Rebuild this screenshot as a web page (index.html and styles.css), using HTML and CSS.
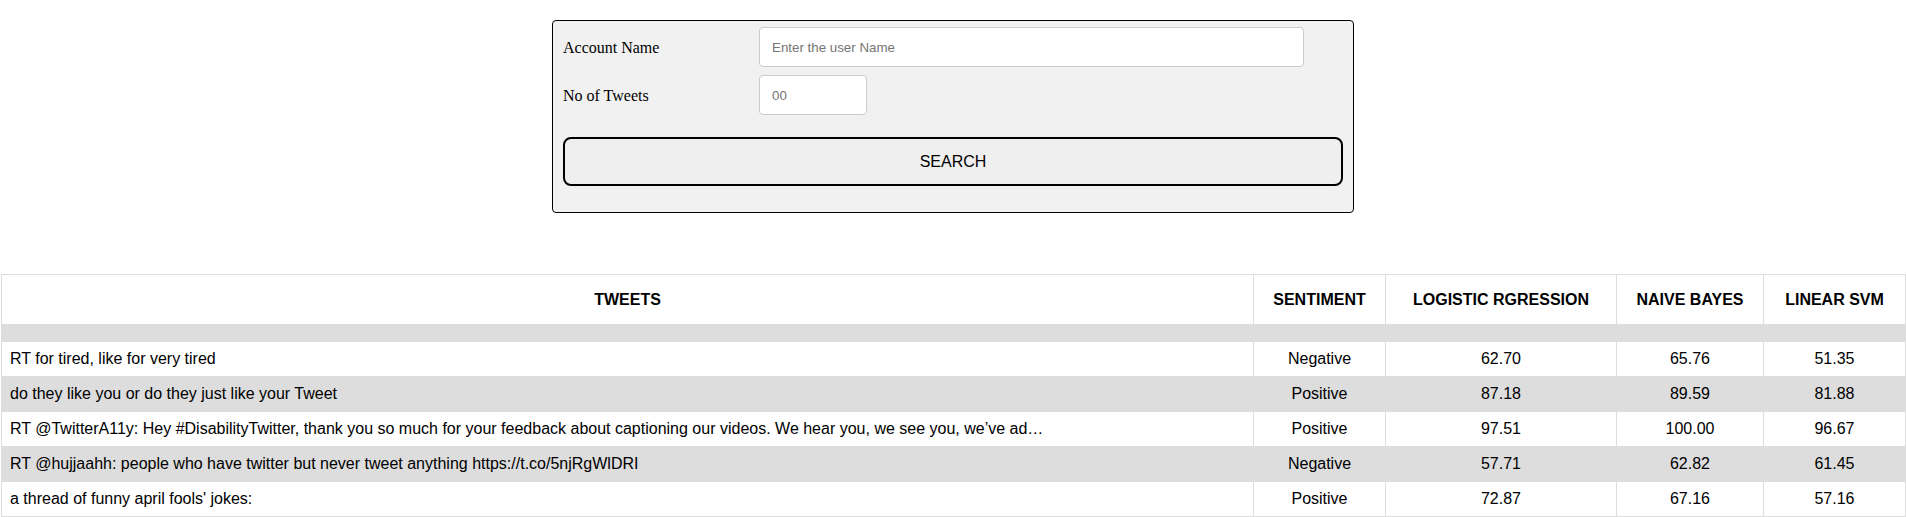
FILE: index.html
```html
<!DOCTYPE html>
<html lang="en">
<head>
<meta charset="utf-8">
<title>Tweet Sentiment</title>
<link rel="stylesheet" href="styles.css">
</head>
<body>
<form class="search-box">
  <div class="field-row">
    <label class="field-label" for="acc">Account Name</label>
    <input class="field-input input-name" id="acc" type="text" placeholder="Enter the user Name">
  </div>
  <div class="field-row">
    <label class="field-label" for="cnt">No of Tweets</label>
    <input class="field-input input-count" id="cnt" type="text" placeholder="00">
  </div>
  <button class="search-btn" type="button">SEARCH</button>
</form>

<table class="results">
  <colgroup>
    <col class="col-tweet">
    <col class="col-sent">
    <col class="col-lr">
    <col class="col-nb">
    <col class="col-svm">
  </colgroup>
  <thead>
    <tr>
      <th>TWEETS</th>
      <th>SENTIMENT</th>
      <th>LOGISTIC RGRESSION</th>
      <th>NAIVE BAYES</th>
      <th>LINEAR SVM</th>
    </tr>
  </thead>
  <tbody>
    <tr class="empty-row"><td></td><td></td><td></td><td></td><td></td></tr>
    <tr><td class="tweet">RT for tired, like for very tired</td><td>Negative</td><td>62.70</td><td>65.76</td><td>51.35</td></tr>
    <tr><td class="tweet">do they like you or do they just like your Tweet</td><td>Positive</td><td>87.18</td><td>89.59</td><td>81.88</td></tr>
    <tr><td class="tweet">RT @TwitterA11y: Hey #DisabilityTwitter, thank you so much for your feedback about captioning our videos. We hear you, we see you, we’ve ad…</td><td>Positive</td><td>97.51</td><td>100.00</td><td>96.67</td></tr>
    <tr><td class="tweet">RT @hujjaahh: people who have twitter but never tweet anything https://t.co/5njRgWlDRI</td><td>Negative</td><td>57.71</td><td>62.82</td><td>61.45</td></tr>
    <tr><td class="tweet">a thread of funny april fools' jokes:</td><td>Positive</td><td>72.87</td><td>67.16</td><td>57.16</td></tr>
  </tbody>
</table>
</body>
</html>
```

FILE: styles.css
```css
html, body {
  margin: 0;
  padding: 0;
  background: #fff;
}

body {
  font-family: "Liberation Sans", Arial, sans-serif;
  color: #000;
}

.search-box {
  width: 780px;
  margin: 20px auto 0;
  padding: 6px 10px 26px;
  border: 1px solid #000;
  border-radius: 4px;
  background: #f1f1f1;
  display: flex;
  flex-direction: column;
  gap: 8px;
}

.field-row {
  display: flex;
  align-items: center;
  height: 40px;
}

.field-label {
  width: 196px;
  flex: none;
  padding-top: 1px;
  font-family: "Liberation Serif", "Times New Roman", serif;
  font-size: 16px;
  color: #000;
}

.field-input {
  box-sizing: border-box;
  height: 40px;
  border: 1px solid #ccc;
  border-radius: 4px;
  background: #fff;
  padding: 0 12px;
  font-family: "Liberation Sans", Arial, sans-serif;
  font-size: 13.333px;
  color: #000;
  outline: none;
}

.field-input::placeholder {
  color: #757575;
}

.input-name {
  width: 545px;
}

.input-count {
  width: 108px;
}

.search-btn {
  box-sizing: border-box;
  margin-top: 14px;
  height: 49px;
  width: 100%;
  border: 2px solid #000;
  border-radius: 8px;
  background: #efefef;
  font-family: "Liberation Sans", Arial, sans-serif;
  font-size: 16px;
  color: #000;
  cursor: pointer;
}

.results {
  width: calc(100% - 2px);
  margin: 61px 1px 0;
  border-collapse: collapse;
  table-layout: fixed;
  font-size: 16px;
}

.col-tweet { width: 1252px; }
.col-sent { width: 132px; }
.col-lr { width: 231px; }
.col-nb { width: 147px; }
.col-svm { width: 142px; }

.results th,
.results td {
  border: 1px solid #ddd;
  text-align: center;
  white-space: nowrap;
  overflow: hidden;
}

.results th {
  padding: 15.5px 8px;
  font-weight: bold;
}

.results td {
  padding: 8px;
  line-height: 18px;
}

.results td.tweet {
  text-align: left;
}

.results tbody tr:nth-child(odd) {
  background: #ddd;
}
```
